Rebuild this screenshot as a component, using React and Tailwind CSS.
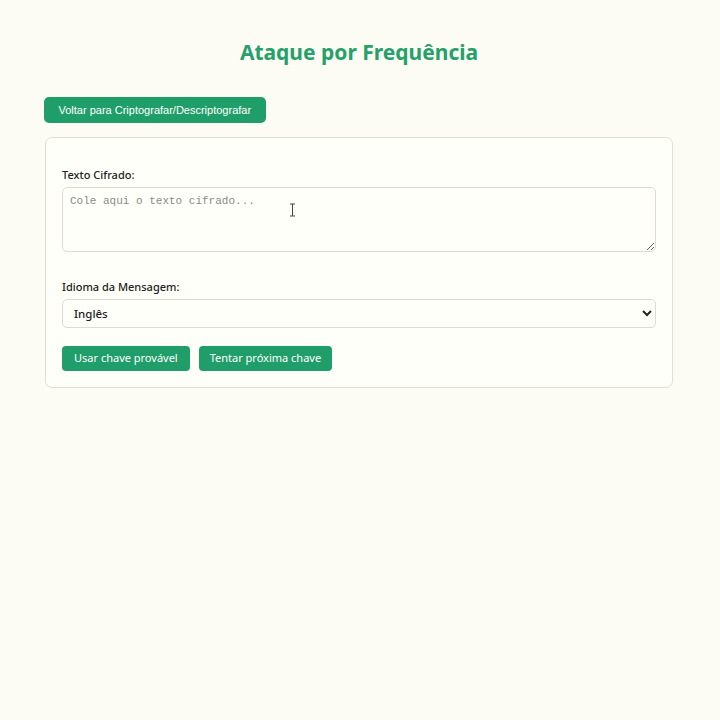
import { useState } from "react";

export default function App() {
    const [texto, setTexto] = useState("");
    const [idioma, setIdioma] = useState("en");

    return (
        <div className="min-h-[720px] w-full bg-[#fcfcf5] font-['Noto_Sans','Open_Sans',sans-serif] text-[#222]">
            <div className="ml-[45px] w-[628px] pt-[36px]">
                <h1 className="text-center text-[21px] font-bold leading-[32px] text-[#26a06a]">
                    Ataque por Frequência
                </h1>

                <button
                    type="button"
                    className="mt-[29px] ml-[-1px] h-[26px] rounded-[5px] bg-[#1f9e6a] px-[14.5px] font-['Liberation_Sans',Arial,sans-serif] text-[11px] text-white"
                >
                    Voltar para Criptografar/Descriptografar
                </button>

                <div className="mt-[14px] rounded-[7px] border border-[#dedfd6] bg-[#fffffa] px-[16px] pt-[30px] pb-[16px]">
                    <label className="block text-[11px] font-medium leading-[14px] text-[#222]">Texto Cifrado:</label>
                    <div className="relative mt-[5px]">
                        <textarea
                            value={texto}
                            onChange={(e) => setTexto(e.target.value)}
                            placeholder="Cole aqui o texto cifrado..."
                            className="block h-[65px] w-full resize-y rounded-[5px] border border-[#dcdcd4] bg-[#fffffa] px-[7px] py-[6px] font-['Liberation_Mono',monospace] text-[11px] leading-[14px] placeholder:text-[#8a8a8a] outline-none"
                        />
                        <svg className="pointer-events-none absolute left-[227px] top-[16px]" width="7" height="14" viewBox="0 0 7 14">
                            <path d="M1 1h5M3.5 1v12M1 13h5" stroke="#444" strokeWidth="1" fill="none" />
                        </svg>
                    </div>

                    <label className="mt-[28px] block text-[11px] font-medium leading-[14px] text-[#222]">Idioma da Mensagem:</label>
                    <select
                        value={idioma}
                        onChange={(e) => setIdioma(e.target.value)}
                        className="mt-[5px] block h-[29px] w-full rounded-[5px] border border-[#dcdcd4] bg-[#fffffa] px-[7px] text-[11.5px] font-medium text-[#222] outline-none"
                    >
                        <option value="en">Inglês</option>
                        <option value="pt">Português</option>
                    </select>

                    <div className="mt-[18px] flex gap-[9px]">
                        <button type="button" className="h-[25px] rounded-[4px] bg-[#1f9e6a] px-[12px] text-[11px] text-white">
                            Usar chave provável
                        </button>
                        <button type="button" className="h-[25px] rounded-[4px] bg-[#1f9e6a] px-[11px] text-[11px] text-white">
                            Tentar próxima chave
                        </button>
                    </div>
                </div>
            </div>
        </div>
    );
}
